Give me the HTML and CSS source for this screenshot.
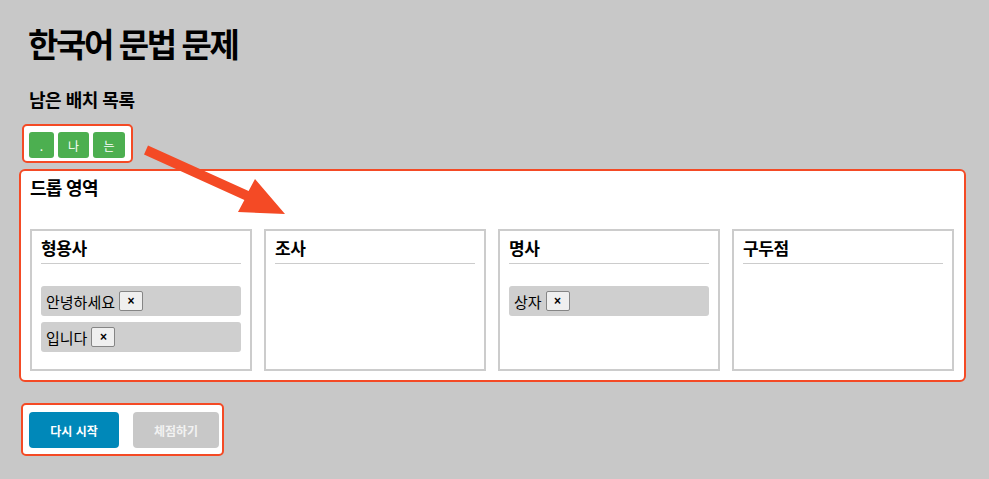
FILE: index.html
```html
<!DOCTYPE html>
<html lang="ko">
<head>
<meta charset="utf-8">
<title>한국어 문법 문제</title>
<link rel="stylesheet" href="styles.css">
</head>
<body>
<main class="page">
  <h1 class="title">한국어 문법 문제</h1>
  <h2 class="subtitle">남은 배치 목록</h2>
  <div class="bank">
    <span class="tile tile-dot">.</span>
    <span class="tile tile-na">나</span>
    <span class="tile tile-neun">는</span>
  </div>
  <section class="drop">
    <h3 class="drop-title">드롭 영역</h3>
    <div class="columns">
      <div class="col">
        <div class="col-head">형용사</div>
        <div class="items">
          <div class="item">안녕하세요 <button class="x">×</button></div>
          <div class="item">입니다 <button class="x">×</button></div>
        </div>
      </div>
      <div class="col">
        <div class="col-head">조사</div>
        <div class="items"></div>
      </div>
      <div class="col">
        <div class="col-head">명사</div>
        <div class="items">
          <div class="item">상자 <button class="x">×</button></div>
        </div>
      </div>
      <div class="col">
        <div class="col-head">구두점</div>
        <div class="items"></div>
      </div>
    </div>
  </section>
  <div class="actions">
    <button class="btn btn-reset">다시 시작</button>
    <button class="btn btn-check">체점하기</button>
  </div>
</main>
<svg class="arrow" width="989" height="479" viewBox="0 0 989 479" aria-hidden="true">
  <polygon points="148,145.5 248.6,191 255,179 285,214 238,212 244.4,200 144,154.5" fill="#f44a25"/>
</svg>
</body>
</html>
```
FILE: styles.css
```css
html, body {
  margin: 0;
  padding: 0;
}
body {
  background: #c8c8c8;
  font-family: "Noto Sans CJK KR", "Noto Sans", sans-serif;
  color: #000;
  width: 989px;
  height: 479px;
  overflow: hidden;
  position: relative;
}
.page {
  display: flex;
  flex-direction: column;
  align-items: flex-start;
  padding: 21px 23px 0 19px;
}
.title {
  margin: 0 0 0 9px;
  font-size: 33px;
  font-weight: 700;
  line-height: 44px;
  letter-spacing: -2.4px;
}
.subtitle {
  margin: 22px 0 0 10px;
  font-size: 18px;
  font-weight: 700;
  line-height: 24px;
  letter-spacing: -0.5px;
}
.bank {
  margin: 13px 0 0 3px;
  display: flex;
  gap: 4px;
  padding: 6px 6px 3px 5px;
  background: #fff;
  border: 2px solid #f44a25;
  border-radius: 5px;
}
.tile {
  display: flex;
  align-items: center;
  justify-content: center;
  height: 26px;
  background: #4caf50;
  color: #fff;
  font-size: 12px;
  border-radius: 3px;
}
.tile-dot { width: 25px; }
.tile-na { width: 31px; }
.tile-neun { width: 32px; }

.drop {
  margin-top: 6px;
  align-self: stretch;
  background: #fff;
  border: 2px solid #f44a25;
  border-radius: 6px;
  padding: 4px 10px 9px 9px;
}
.drop-title {
  margin: 0;
  font-size: 18px;
  font-weight: 700;
  line-height: 24px;
  letter-spacing: -0.7px;
}
.columns {
  margin-top: 30px;
  display: grid;
  grid-template-columns: repeat(4, 222px);
  gap: 12px;
}
.col {
  border: 2px solid #cccccc;
  background: #fff;
  height: 142px;
  box-sizing: border-box;
  padding: 5px 9px 9px 9px;
}
.col-head {
  font-size: 17px;
  font-weight: 700;
  line-height: 24px;
  padding-bottom: 3px;
  border-bottom: 1px solid #cccccc;
  letter-spacing: -0.4px;
}
.items {
  margin-top: 22px;
  display: flex;
  flex-direction: column;
  gap: 6px;
}
.item {
  display: flex;
  align-items: center;
  gap: 4px;
  height: 30px;
  padding-left: 5px;
  background: #cfcfcf;
  border-radius: 3px;
  font-size: 15px;
  letter-spacing: 0;
}
.x {
  width: 24px;
  height: 20px;
  margin: 0;
  padding: 0;
  font-family: "Liberation Sans", sans-serif;
  font-size: 12px;
  font-weight: 700;
  color: #000;
  background: #efefef;
  border: 1px solid #858585;
  border-radius: 2px;
}

.actions {
  margin-top: 21px;
  margin-left: 2px;
  display: flex;
  gap: 14px;
  padding: 7px 3px 6px 6px;
  background: #fff;
  border: 2px solid #f44a25;
  border-radius: 5px;
}
.btn {
  height: 36px;
  border: none;
  border-radius: 4px;
  font-family: "Noto Sans CJK KR", sans-serif;
  font-size: 12px;
  font-weight: 700;
  padding: 0;
  color: #fff;
}
.btn-reset {
  width: 90px;
  background: #0088b9;
}
.btn-check {
  width: 86px;
  background: #c8c8c8;
  color: #f2f2f2;
}
.arrow {
  position: absolute;
  left: 0;
  top: 0;
  pointer-events: none;
}
```
